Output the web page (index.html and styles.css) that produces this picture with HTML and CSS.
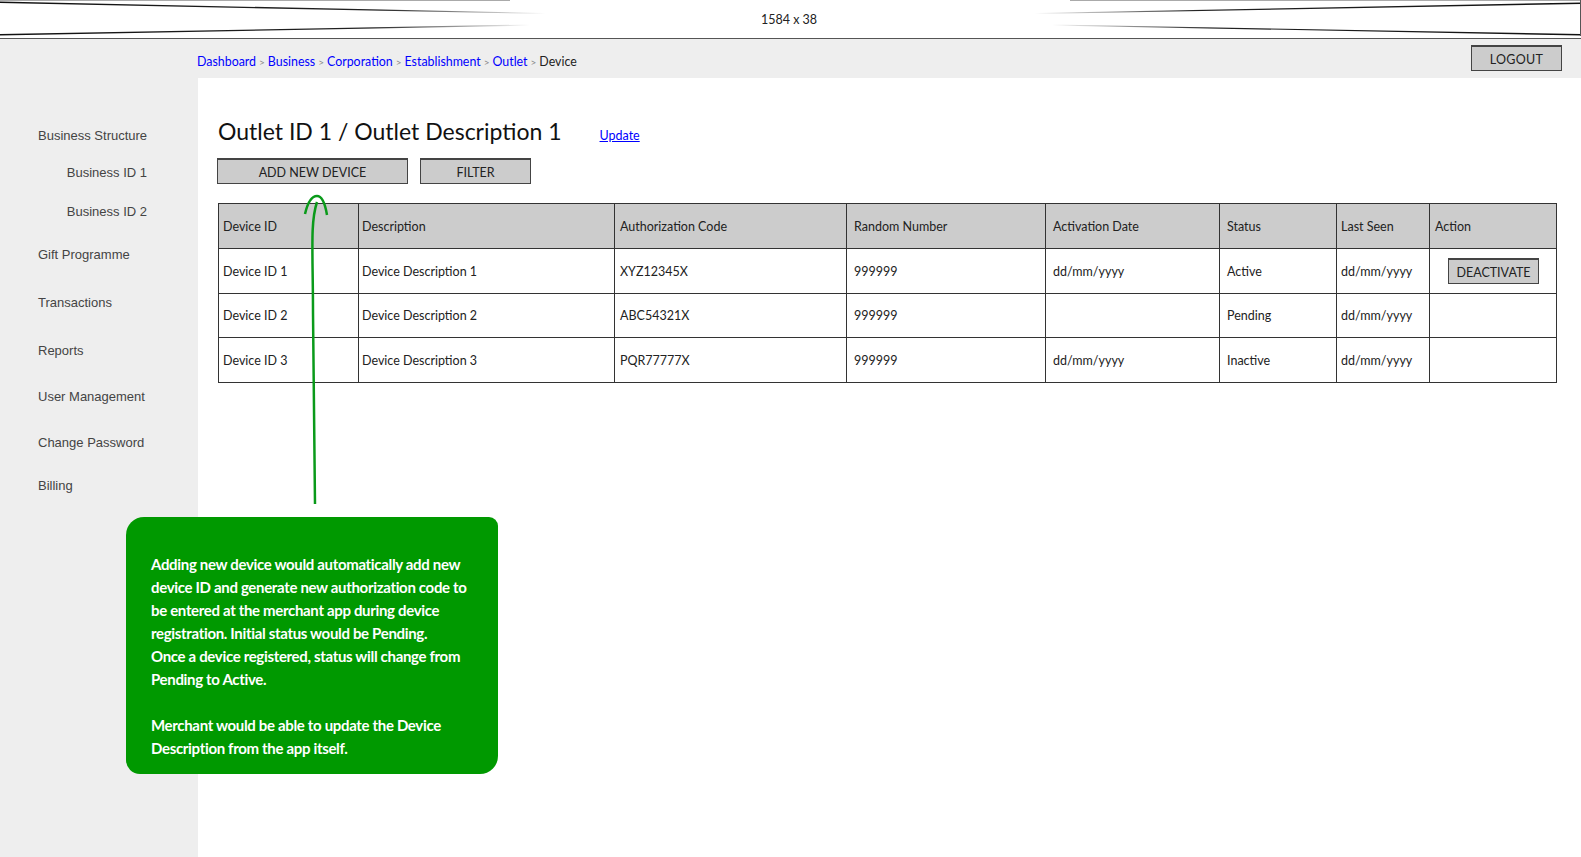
FILE: index.html
```html
<!DOCTYPE html>
<html lang="en">
<head>
    <meta charset="UTF-8">
    <meta name="viewport" content="width=device-width, initial-scale=1.0">
    <title>Outlet Devices</title>
    <link rel="stylesheet" href="styles.css">
</head>
<body>

    <!-- image placeholder banner -->
    <div class="banner">
        <svg class="banner-lines" viewBox="0 0 1581 38" preserveAspectRatio="none">
            <defs>
                <linearGradient id="fadeLeft" x1="0" y1="0" x2="1" y2="0">
                    <stop offset="0" stop-color="#111"/>
                    <stop offset="0.7" stop-color="#222"/>
                    <stop offset="1" stop-color="#222" stop-opacity="0"/>
                </linearGradient>
                <linearGradient id="fadeRight" x1="1" y1="0" x2="0" y2="0">
                    <stop offset="0" stop-color="#111"/>
                    <stop offset="0.7" stop-color="#222"/>
                    <stop offset="1" stop-color="#222" stop-opacity="0"/>
                </linearGradient>
            </defs>
            <polygon points="0,1.5 0,3 545,14 545,13" fill="url(#fadeLeft)"/>
            <polygon points="0,34 0,35.5 530,25.5 530,24.5" fill="url(#fadeLeft)"/>
            <polygon points="1581,2.5 1581,4 1035,14 1035,13" fill="url(#fadeRight)"/>
            <polygon points="1581,34 1581,35.5 1052,25.5 1052,24.5" fill="url(#fadeRight)"/>
            <line x1="0" y1="0.5" x2="510" y2="0.5" stroke="#aaa"/>
            <line x1="1070" y1="0.5" x2="1581" y2="0.5" stroke="#aaa"/>
            <line x1="1580.5" y1="0" x2="1580.5" y2="36" stroke="#555"/>
        </svg>
        <span class="banner-label">1584 x 38</span>
    </div>

    <div class="topbar">
        <div class="breadcrumb">
            <a href="#">Dashboard</a><span class="sep">&gt;</span>
            <a href="#">Business</a><span class="sep">&gt;</span>
            <a href="#">Corporation</a><span class="sep">&gt;</span>
            <a href="#">Establishment</a><span class="sep">&gt;</span>
            <a href="#">Outlet</a><span class="sep">&gt;</span>
            <span>Device</span>
        </div>
        <button class="btn btn-logout">LOGOUT</button>
    </div>

    <div class="layout">
        <nav class="sidebar">
            <a class="nav-item" href="#">Business Structure</a>
            <a class="nav-item nav-sub" href="#">Business ID 1</a>
            <a class="nav-item nav-sub" href="#">Business ID 2</a>
            <a class="nav-item" href="#">Gift Programme</a>
            <a class="nav-item" href="#">Transactions</a>
            <a class="nav-item" href="#">Reports</a>
            <a class="nav-item" href="#">User Management</a>
            <a class="nav-item" href="#">Change Password</a>
            <a class="nav-item" href="#">Billing</a>
        </nav>

        <main class="content">
            <div class="title-row">
                <h1>Outlet ID 1 / Outlet Description 1</h1>
                <a class="update-link" href="#">Update</a>
            </div>

            <div class="actions">
                <button class="btn btn-add">ADD NEW DEVICE</button>
                <button class="btn btn-filter">FILTER</button>
            </div>

            <table class="devices">
                <colgroup>
                    <col class="c-id"><col class="c-desc"><col class="c-auth"><col class="c-rand">
                    <col class="c-date"><col class="c-status"><col class="c-seen"><col class="c-action">
                </colgroup>
                <thead>
                    <tr>
                        <th>Device ID</th>
                        <th>Description</th>
                        <th>Authorization Code</th>
                        <th>Random Number</th>
                        <th>Activation Date</th>
                        <th>Status</th>
                        <th>Last Seen</th>
                        <th>Action</th>
                    </tr>
                </thead>
                <tbody>
                    <tr>
                        <td>Device ID 1</td>
                        <td>Device Description 1</td>
                        <td>XYZ12345X</td>
                        <td>999999</td>
                        <td>dd/mm/yyyy</td>
                        <td>Active</td>
                        <td>dd/mm/yyyy</td>
                        <td><button class="btn btn-deactivate">DEACTIVATE</button></td>
                    </tr>
                    <tr>
                        <td>Device ID 2</td>
                        <td>Device Description 2</td>
                        <td>ABC54321X</td>
                        <td>999999</td>
                        <td></td>
                        <td>Pending</td>
                        <td>dd/mm/yyyy</td>
                        <td></td>
                    </tr>
                    <tr>
                        <td>Device ID 3</td>
                        <td>Device Description 3</td>
                        <td>PQR77777X</td>
                        <td>999999</td>
                        <td>dd/mm/yyyy</td>
                        <td>Inactive</td>
                        <td>dd/mm/yyyy</td>
                        <td></td>
                    </tr>
                </tbody>
            </table>
        </main>
    </div>

    <!-- green annotation over the page -->
    <svg class="arrow" width="40" height="320" viewBox="0 0 40 320">
        <path d="M23 9 C16 30 19 60 19 120 L21 311" fill="none" stroke="#0a9a1a" stroke-width="2.5"/>
        <path d="M11 21 C14 8 18 3 23 3 C28 3 31 10 33 22" fill="none" stroke="#0a9a1a" stroke-width="2.5"/>
    </svg>

    <div class="note">
        <p>Adding new device would automatically add new<br>
        device ID and generate new authorization code to<br>
        be entered at the merchant app during device<br>
        registration. Initial status would be Pending.<br>
        Once a device registered, status will change from<br>
        Pending to Active.</p>
        <p>Merchant would be able to update the Device<br>
        Description from the app itself.</p>
    </div>

</body>
</html>
```

FILE: styles.css
```css
* {
    box-sizing: border-box;
}
body {
    margin: 0;
    height: 857px;
    overflow: hidden;
    position: relative;
    font-family: 'Lato', sans-serif;
    font-size: 13px;
    color: #222;
    background-color: #fff;
}
a {
    color: #0000ff;
    text-decoration: none;
}

/* banner */
.banner {
    height: 39px;
    position: relative;
    display: flex;
    align-items: center;
    justify-content: center;
    border-bottom: 1px solid #555;
}
.banner-lines {
    position: absolute;
    top: 0;
    left: 0;
    width: 100%;
    height: 38px;
}
.banner-label {
    font-size: 12.5px;
    margin-left: -3px;
}

/* top bar */
.topbar {
    height: 39px;
    background-color: #eeeeee;
    display: flex;
    align-items: flex-start;
    justify-content: space-between;
    padding: 6px 19px 0 197px;
}
.breadcrumb {
    padding-top: 9px;
    font-size: 12.4px;
    line-height: 16px;
    display: flex;
    gap: 3px;
}
.breadcrumb .sep {
    color: #888;
    font-size: 10px;
}

/* buttons */
.btn {
    height: 26px;
    padding: 1px 0 0;
    font-family: inherit;
    font-size: 12.5px;
    color: #222;
    background-color: #cccccc;
    border: 1px solid #444;
    border-top-width: 2px;
}
.btn-logout {
    width: 91px;
    letter-spacing: 0.3px;
}
.btn-add {
    width: 191px;
}
.btn-filter {
    width: 111px;
}
.btn-deactivate {
    width: 91px;
    display: block;
}

/* layout */
.layout {
    display: flex;
    height: 779px;
}
.sidebar {
    width: 198px;
    flex-shrink: 0;
    background-color: #eeeeee;
    padding-top: 48px;
    display: flex;
    flex-direction: column;
}
.nav-item {
    height: 20px;
    line-height: 20px;
    padding-left: 38px;
    font-family: 'Liberation Sans', Arial, sans-serif;
    font-size: 13px;
    color: #444;
}
.nav-sub {
    padding-left: 0;
    width: 147px;
    text-align: right;
}
.nav-item:nth-child(2) { margin-top: 17px; }
.nav-item:nth-child(3) { margin-top: 19px; }
.nav-item:nth-child(4) { margin-top: 23px; }
.nav-item:nth-child(5) { margin-top: 28px; }
.nav-item:nth-child(6) { margin-top: 28px; }
.nav-item:nth-child(7) { margin-top: 26px; }
.nav-item:nth-child(8) { margin-top: 26px; }
.nav-item:nth-child(9) { margin-top: 23px; }

.content {
    flex: 1;
    padding: 39px 0 0 20px;
}
.title-row {
    height: 28px;
    display: flex;
    align-items: center;
    gap: 38px;
}
h1 {
    margin: 0;
    font-size: 23px;
    font-weight: 400;
    color: #111;
}
.update-link {
    font-size: 12.5px;
    text-decoration: underline;
    margin-top: 8px;
}
.actions {
    display: flex;
    gap: 12px;
    margin: 13px 0 0 -1px;
}

/* table */
.devices {
    width: 1338px;
    margin-top: 19px;
    table-layout: fixed;
    border-collapse: collapse;
}
.c-id { width: 140px; }
.c-desc { width: 256px; }
.c-auth { width: 232px; }
.c-rand { width: 199px; }
.c-date { width: 174px; }
.c-status { width: 117px; }
.c-seen { width: 93px; }
.c-action { width: 127px; }
.devices th,
.devices td {
    height: 45px;
    padding: 0 0 0 5px;
    border: 1px solid #333;
    font-size: 12.5px;
    font-weight: 400;
    text-align: left;
}
.devices tbody tr:nth-child(2) td {
    height: 44px;
}
.devices th {
    background-color: #cccccc;
}
.devices tr > :nth-child(1) { padding-left: 4px; }
.devices tr > :nth-child(2) { padding-left: 3px; }
.devices tr > :nth-child(4),
.devices tr > :nth-child(5),
.devices tr > :nth-child(6) { padding-left: 7px; }
.devices tr > :nth-child(7) { padding-left: 4px; }
.devices td:nth-child(8) { padding-left: 18px; }

/* annotation */
.arrow {
    position: absolute;
    left: 294px;
    top: 193px;
}
.note {
    position: absolute;
    left: 126px;
    top: 517px;
    width: 372px;
    height: 257px;
    padding: 36px 0 0 25px;
    background-color: #009900;
    border-radius: 18px 9px 18px 14px;
    color: #fff;
    font-size: 15px;
    font-weight: 700;
    letter-spacing: -0.33px;
    line-height: 23px;
    white-space: nowrap;
}
.note p {
    margin: 0 0 23px;
}
```
